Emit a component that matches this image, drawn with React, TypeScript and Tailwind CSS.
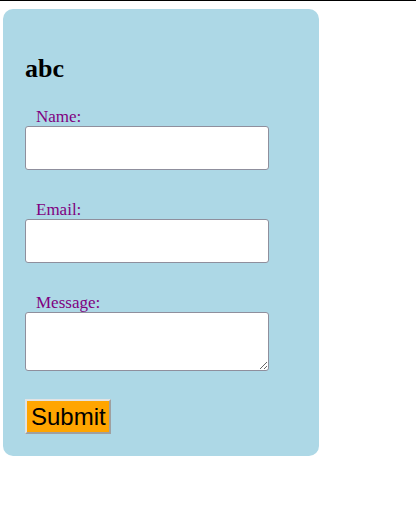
export default function App() {
  return (
    <div className="min-h-[524px] border-t border-black bg-white font-['Liberation_Serif',serif]">
      <div className="ml-[3px] mt-[8px] w-[316px] rounded-[10px] bg-[#add8e6] px-[22px] pt-[46px] pb-[22px]">
        <h2 className="text-[26px] font-bold leading-[28px] text-black">abc</h2>
        <form className="mt-[25px] flex flex-col">
          <label className="block pl-[11px] text-[17px] leading-[18px] text-[#800080]">Name:</label>
          <input
            type="text"
            className="h-[44px] w-[244px] rounded-[3px] border border-[#8f8f9d] bg-white"
          />
          <label className="mt-[31px] block pl-[11px] text-[17px] leading-[18px] text-[#800080]">Email:</label>
          <input
            type="email"
            className="h-[44px] w-[244px] rounded-[3px] border border-[#8f8f9d] bg-white"
          />
          <label className="mt-[31px] block pl-[11px] text-[17px] leading-[18px] text-[#800080]">Message:</label>
          <textarea className="h-[59px] w-[244px] rounded-[3px] border border-[#8f8f9d] bg-white" />
          <div className="mt-[28px]">
            <button
              type="button"
              className="h-[35px] w-[86px] border-2 border-t-[#e3e3e3] border-l-[#e3e3e3] border-r-[#a0a0a0] border-b-[#a0a0a0] bg-[#ffa500] px-[4px] font-['Liberation_Sans',sans-serif] text-[24px] leading-[29px] text-black"
            >
              Submit
            </button>
          </div>
        </form>
      </div>
    </div>
  )
}
